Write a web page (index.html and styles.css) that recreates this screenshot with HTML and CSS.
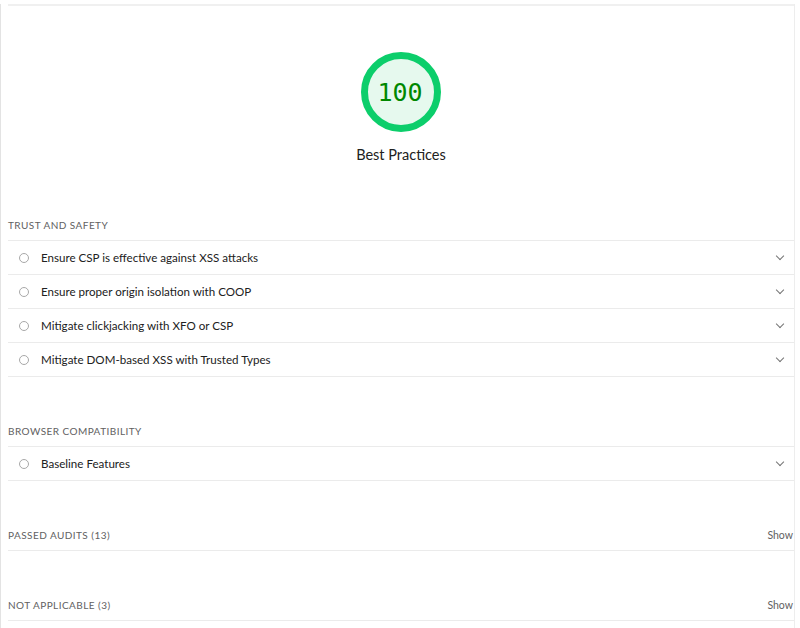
FILE: index.html
```html
<!DOCTYPE html>
<html lang="en">
<head>
    <meta charset="UTF-8">
    <meta name="viewport" content="width=device-width, initial-scale=1.0">
    <title>Best Practices - Lighthouse Report</title>
    <link rel="stylesheet" href="styles.css">
</head>
<body>
    <div class="report">
        <div class="top-rule"></div>

        <div class="score-header">
            <div class="gauge">
                <svg viewBox="0 0 80 80" width="80" height="80">
                    <circle cx="40" cy="40" r="36.5" fill="#e6f9ee" stroke="#0cce6b" stroke-width="7"/>
                </svg>
                <span class="gauge-value">100</span>
            </div>
            <div class="gauge-label">Best Practices</div>
        </div>

        <section class="group">
            <div class="group-title">Trust and Safety</div>
            <div class="audit">
                <span class="audit-icon"></span>
                <span class="audit-title">Ensure CSP is effective against XSS attacks</span>
                <span class="chevron"></span>
            </div>
            <div class="audit">
                <span class="audit-icon"></span>
                <span class="audit-title">Ensure proper origin isolation with COOP</span>
                <span class="chevron"></span>
            </div>
            <div class="audit">
                <span class="audit-icon"></span>
                <span class="audit-title">Mitigate clickjacking with XFO or CSP</span>
                <span class="chevron"></span>
            </div>
            <div class="audit">
                <span class="audit-icon"></span>
                <span class="audit-title">Mitigate DOM-based XSS with Trusted Types</span>
                <span class="chevron"></span>
            </div>
        </section>

        <section class="group">
            <div class="group-title">Browser Compatibility</div>
            <div class="audit">
                <span class="audit-icon"></span>
                <span class="audit-title">Baseline Features</span>
                <span class="chevron"></span>
            </div>
        </section>

        <section class="group">
            <div class="group-title clump">
                <span>Passed audits <span class="count">(13)</span></span>
                <a class="show" href="#">Show</a>
            </div>
        </section>

        <section class="group">
            <div class="group-title clump">
                <span>Not applicable <span class="count">(3)</span></span>
                <a class="show" href="#">Show</a>
            </div>
        </section>
    </div>
</body>
</html>
```

FILE: styles.css
```css
:root {
    --text-color: #212121;
    --secondary-color: #616161;
    --divider-color: #ebebeb;
    --pass-color: #0cce6b;
    --pass-text: #008800;
}

body {
    margin: 0;
    padding: 0;
    background-color: #fff;
    color: var(--text-color);
    font-family: 'Lato', sans-serif;
    overflow: hidden;
}

.report {
    width: 786px;
    min-height: 628px;
    padding-left: 7px;
    border-left: 1px solid #e3e3e3;
    border-right: 1px solid #ededed;
}

.top-rule {
    height: 2px;
    margin-top: 4px;
    background-color: #f0f0f0;
}

.score-header {
    display: flex;
    flex-direction: column;
    align-items: center;
    padding-top: 46px;
}

.gauge {
    position: relative;
    width: 80px;
    height: 80px;
}

.gauge svg {
    display: block;
}

.gauge-value {
    position: absolute;
    inset: 0;
    display: flex;
    align-items: center;
    justify-content: center;
    padding-right: 2px;
    font-family: 'DejaVu Sans Mono', monospace;
    font-size: 25px;
    color: var(--pass-text);
}

.gauge-label {
    margin-top: 12px;
    font-size: 14.5px;
    line-height: 22px;
}

.group {
    margin-top: 47px;
}

.score-header + .group {
    margin-top: 52px;
}

.group-title {
    font-size: 10px;
    line-height: 14px;
    padding-bottom: 8px;
    text-transform: uppercase;
    letter-spacing: 0.45px;
    color: var(--secondary-color);
    border-bottom: 1px solid var(--divider-color);
}

.clump {
    display: flex;
    justify-content: space-between;
    align-items: center;
}

.show {
    text-transform: none;
    letter-spacing: 0;
    color: var(--secondary-color);
    text-decoration: none;
    font-size: 10.5px;
    margin-right: 1px;
}

.audit {
    display: flex;
    align-items: center;
    height: 33px;
    border-bottom: 1px solid var(--divider-color);
}

.audit-icon {
    width: 8px;
    height: 8px;
    margin-left: 11px;
    margin-right: 12px;
    border: 1.5px solid #a8a8a8;
    border-radius: 50%;
}

.audit-title {
    flex: 1;
    font-size: 11.6px;
}

.chevron {
    width: 5px;
    height: 5px;
    margin-right: 11px;
    margin-top: -4px;
    border-right: 1.5px solid #757575;
    border-bottom: 1.5px solid #757575;
    transform: rotate(45deg);
}
```
